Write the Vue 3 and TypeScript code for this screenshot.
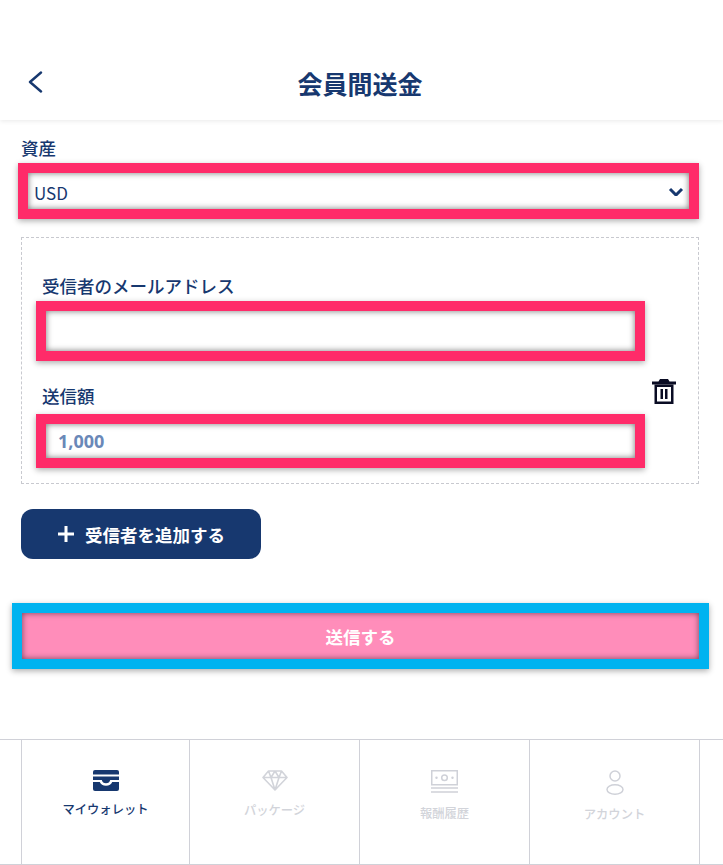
<script setup lang="ts">
const navItems = [
  { key: 'wallet', label: 'マイウォレット', active: true },
  { key: 'package', label: 'パッケージ', active: false },
  { key: 'reward', label: '報酬履歴', active: false },
  { key: 'account', label: 'アカウント', active: false },
]
</script>

<template>
  <div class="page">
    <header class="header">
      <button class="back" aria-label="戻る">
        <svg width="16" height="22" viewBox="0 0 16 22" fill="none">
          <path d="M14 1.5 3 11l11 9.500" stroke="#17386f" stroke-width="2.400" stroke-linecap="round" stroke-linejoin="round" />
        </svg>
      </button>
      <h1 class="title">会員間送金</h1>
    </header>

    <main class="main">
      <label class="label asset-label">資産</label>
      <div class="select box-highlight">
        <span class="select-value">USD</span>
        <svg width="16" height="10" viewBox="0 0 16 10" fill="none">
          <path d="M2 3 8 9l6-6" stroke="#17386f" stroke-width="3" />
        </svg>
      </div>

      <section class="recipient">
        <div class="fields">
          <label class="label field-label first">受信者のメールアドレス</label>
          <input class="input email box-highlight" type="text" />
          <label class="label field-label second">送信額</label>
          <input class="input amount box-highlight" type="text" placeholder="1,000" />
        </div>
        <button class="trash" aria-label="削除">
          <svg width="24" height="25" viewBox="0 0 24 25" fill="#0a0c24">
            <path d="M8 0h8l1.500 2.500H24v3H0v-3h6.500z" />
            <path d="M2.500 5.500h19V25h-19zM5 8v14.500h14V8z" fill-rule="evenodd" />
            <rect x="8.500" y="10" width="2.500" height="10" />
            <rect x="13" y="10" width="2.500" height="10" />
          </svg>
        </button>
      </section>

      <button class="add">
        <svg width="16" height="16" viewBox="0 0 16 16" fill="#fff">
          <rect x="6.500" y="0" width="3" height="16" />
          <rect x="0" y="6.500" width="16" height="3" />
        </svg>
        <span>受信者を追加する</span>
      </button>

      <button class="send">送信する</button>
    </main>

    <nav class="nav">
      <div class="cell"></div>
      <div
        v-for="item in navItems"
        :key="item.key"
        class="cell item"
        :class="[item.key, { active: item.active }]"
      >
        <svg v-if="item.key === 'wallet'" width="26" height="21" viewBox="0 0 26 21">
          <path fill="#17386f" d="M2 0h22a2 2 0 0 1 2 2v17a2 2 0 0 1-2 2H2a2 2 0 0 1-2-2V2a2 2 0 0 1 2-2z" />
          <rect fill="#fff" x="0" y="4.500" width="26" height="2" />
          <path fill="#fff" d="M0 10h8.800c.3 2 2 3.300 4.200 3.300s3.900-1.300 4.200-3.300H26v2h-6.800c-.7 2.400-3.200 3.800-6.200 3.800s-5.500-1.400-6.200-3.800H0z" />
        </svg>
        <svg v-else-if="item.key === 'package'" width="26" height="21" viewBox="0 0 26 21" fill="none" stroke="#d2d4da" stroke-width="1.600" stroke-linejoin="round">
          <path d="M6.500 1h13L25 7.500 13 20 1 7.500zM1 7.500h24M9 7.500 13 20l4-12.500M6.500 1 9 7.500 13 1l4 6.500L19.500 1" />
        </svg>
        <svg v-else-if="item.key === 'reward'" width="27" height="23" viewBox="0 0 27 23" fill="none" stroke="#cfd1d8">
          <rect x=".750" y=".750" width="25.500" height="14" stroke-width="1.500" />
          <circle cx="13.500" cy="7.800" r="2.800" stroke-width="1.500" />
          <circle cx="5.500" cy="7.800" r="1.200" fill="#cfd1d8" stroke="none" />
          <circle cx="21.500" cy="7.800" r="1.200" fill="#cfd1d8" stroke="none" />
          <path d="M0 18h27M0 22h27" stroke-width="1.500" />
        </svg>
        <svg v-else width="18" height="25" viewBox="0 0 18 25" fill="none" stroke="#cfd1d8" stroke-width="1.500">
          <circle cx="9" cy="6" r="5" />
          <ellipse cx="9" cy="19.500" rx="8" ry="4.700" />
        </svg>
        <span class="nav-label">{{ item.label }}</span>
      </div>
      <div class="cell last"></div>
    </nav>
  </div>
</template>

<style>
html,
body {
  margin: 0;
  background: #fff;
}
</style>

<style scoped>
.page {
  width: 723px;
  height: 865px;
  display: flex;
  flex-direction: column;
  overflow: hidden;
  font-family: "Noto Sans CJK JP", "Noto Sans", sans-serif;
  color: #17386f;
  background: #fff;
}
.header {
  height: 120px;
  flex: none;
  display: grid;
  grid-template-columns: 1fr;
  align-items: center;
  justify-items: center;
  box-sizing: border-box;
  padding: 46px 3px 0 0;
  position: relative;
  box-shadow: 0 1px 5px rgba(0, 0, 0, 0.09);
}
.back {
  position: absolute;
  left: 27px;
  top: 71px;
  padding: 0;
  border: 0;
  background: none;
  line-height: 0;
}
.title {
  margin: 0;
  font-size: 25px;
  line-height: 36px;
  font-weight: 700;
}
.main {
  flex: 1;
  box-sizing: border-box;
  padding: 16px 0 0 21px;
  display: flex;
  flex-direction: column;
  align-items: flex-start;
}
.label {
  display: block;
  font-size: 17.500px;
  line-height: 24px;
  font-weight: 500;
  color: #17386f;
}
.asset-label {
  margin-bottom: 3px;
}
.box-highlight {
  box-sizing: border-box;
  border: 10px solid #ff2b69;
  background: #fff;
  box-shadow: 0 2px 6px rgba(0, 0, 0, 0.32), inset 0 0 6px rgba(0, 0, 0, 0.55);
}
.select {
  width: 681px;
  height: 56px;
  margin-left: -3px;
  padding: 0 5px 0 7px;
  display: flex;
  align-items: center;
  justify-content: space-between;
  font-size: 17px;
  color: #17386f;
}
.select-value {
  margin-left: -1px;
  line-height: 24px;
  padding-top: 4px;
}
.recipient {
  width: 678px;
  height: 247px;
  box-sizing: border-box;
  margin-top: 18px;
  padding: 36px 0 0 14px;
  border: 1px dashed #c8c9cf;
  display: flex;
}
.fields {
  width: 609px;
  display: flex;
  flex-direction: column;
}
.field-label {
  margin-left: 6px;
}
.field-label.first {
  margin-bottom: 3px;
}
.field-label.second {
  margin-top: 23px;
  margin-bottom: 6px;
}
.input {
  display: block;
  width: 100%;
  padding: 0 0 0 12px;
  outline: none;
  font: 700 18px "Noto Sans", "Noto Sans CJK JP", sans-serif;
  color: #17386f;
  border-radius: 0;
}
.input::placeholder {
  color: #6a88b8;
  opacity: 1;
}
.email {
  height: 60px;
}
.amount {
  height: 54px;
}
.trash {
  margin: 105px 0 0 7px;
  padding: 0;
  height: 25px;
  border: 0;
  background: none;
  line-height: 0;
}
.add {
  width: 240px;
  height: 50px;
  margin-top: 25px;
  border: 0;
  border-radius: 12px;
  background: #17386f;
  color: #fff;
  font: 700 17.500px "Noto Sans CJK JP", sans-serif;
  display: flex;
  align-items: center;
  justify-content: center;
  gap: 11px;
  padding: 0 0 0 1px;
}
.send {
  width: 697px;
  height: 66px;
  margin: 44px 0 0 -9px;
  box-sizing: border-box;
  border: 10px solid #00b3f0;
  background: #ff8dba;
  color: #fff;
  font: 700 17.500px "Noto Sans CJK JP", sans-serif;
  box-shadow: 0 2px 6px rgba(0, 0, 0, 0.32), inset 0 0 6px rgba(0, 0, 0, 0.55);
  padding: 0;
}
.nav {
  flex: none;
  height: 126px;
  box-sizing: border-box;
  border-top: 1px solid #d0d1d8;
  border-bottom: 1px solid #d0d1d8;
  display: grid;
  grid-template-columns: 22px 168px 170px 170px 170px 1fr;
}
.cell {
  box-sizing: border-box;
  border-right: 1px solid #d0d1d8;
}
.cell.last {
  border-right: 0;
}
.item {
  display: flex;
  flex-direction: column;
  align-items: center;
  padding-top: 30px;
  color: #d2d4da;
}
.item.active {
  color: #17386f;
}
.nav-label {
  font-size: 12.300px;
  line-height: 18px;
  font-weight: 500;
}
.wallet .nav-label {
  margin-top: 9px;
}
.package .nav-label {
  margin-top: 10px;
}
.reward .nav-label {
  margin-top: 11px;
}
.account .nav-label {
  margin-top: 10px;
}
</style>
